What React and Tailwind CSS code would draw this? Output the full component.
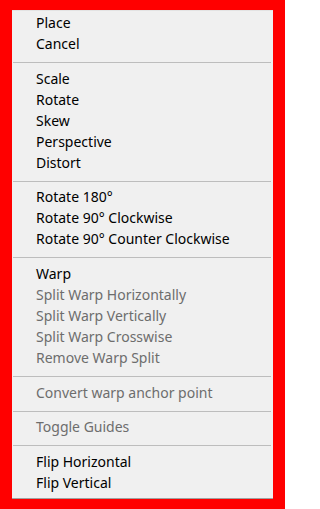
import React from "react";

const groups = [
  [
    { label: "Place" },
    { label: "Cancel" },
  ],
  [
    { label: "Scale" },
    { label: "Rotate" },
    { label: "Skew" },
    { label: "Perspective" },
    { label: "Distort" },
  ],
  [
    { label: "Rotate 180°" },
    { label: "Rotate 90° Clockwise" },
    { label: "Rotate 90° Counter Clockwise" },
  ],
  [
    { label: "Warp" },
    { label: "Split Warp Horizontally", disabled: true },
    { label: "Split Warp Vertically", disabled: true },
    { label: "Split Warp Crosswise", disabled: true },
    { label: "Remove Warp Split", disabled: true },
  ],
  [{ label: "Convert warp anchor point", disabled: true }],
  [{ label: "Toggle Guides", disabled: true }],
  [
    { label: "Flip Horizontal" },
    { label: "Flip Vertical" },
  ],
];

function MenuItem({ label, disabled }) {
  return (
    <div
      className={
        disabled
          ? "h-[21px] leading-[21px] pl-[24px] text-[#6d6d6d] whitespace-nowrap"
          : "h-[21px] leading-[21px] pl-[24px] text-black whitespace-nowrap"
      }
    >
      {label}
    </div>
  );
}

function Separator({ tight }) {
  return (
    <div className={tight ? "pt-[8px] pb-[4px] pl-px pr-[2px]" : "pt-[8px] pb-[5px] pl-px pr-[2px]"}>
      <div className="h-px bg-[#bdbdbd]" />
    </div>
  );
}

export default function App() {
  return (
    <div className="w-[285px] h-[509px] bg-[#ff0000] pt-[10px] pl-[12px]">
      <div
        className="w-[261px] h-[489px] bg-[#f0f0f0] border-t border-t-[#e3e3e3] border-b border-b-[#a0a0a0] pt-[1px] text-[14px]"
        style={{ fontFamily: '"Noto Sans", "Open Sans", sans-serif' }}
      >
        {groups.map((items, gi) => (
          <div key={gi}>
            {gi > 0 && <Separator tight={gi === 2 || gi === 5} />}
            {items.map((it) => (
              <MenuItem key={it.label} label={it.label} disabled={it.disabled} />
            ))}
          </div>
        ))}
      </div>
    </div>
  );
}
